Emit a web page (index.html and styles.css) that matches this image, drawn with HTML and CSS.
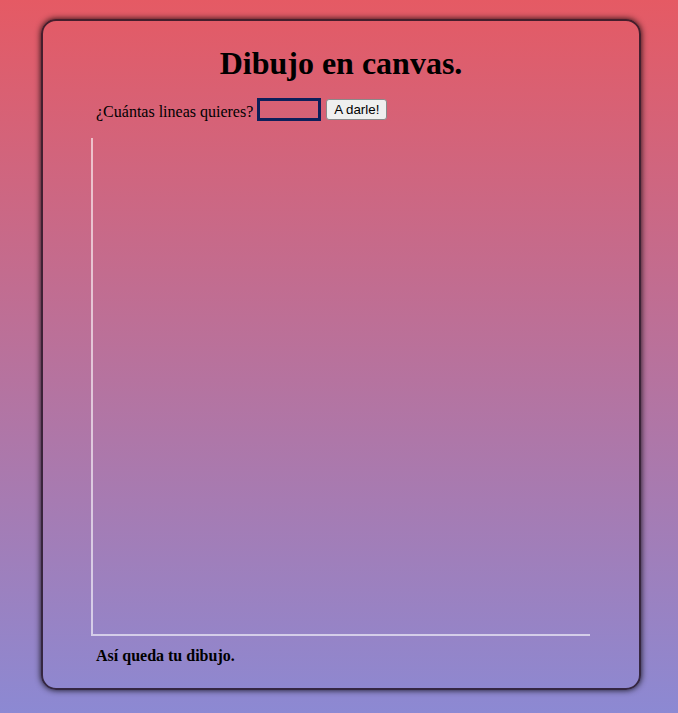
FILE: index.html
```html
<!DOCTYPE html>
<html lang="es">
<head>
<meta charset="utf-8">
<title>Dibujo en canvas</title>
<link rel="stylesheet" href="styles.css">
</head>
<body>
<main class="card">
  <h1 class="title">Dibujo en canvas.</h1>
  <div class="controls">
    <span class="prompt">¿Cuántas lineas quieres?</span>
    <input class="lines-input" type="text">
    <button class="go-btn" type="button">A darle!</button>
  </div>
  <div class="canvas"></div>
  <p class="caption">Así queda tu dibujo.</p>
</main>
</body>
</html>
```
FILE: styles.css
```css
html, body {
  margin: 0;
  padding: 0;
  height: 713px;
}
body {
  background: linear-gradient(to bottom, #e55a64 0%, #8c89d3 100%);
  font-family: "Liberation Serif", "Times New Roman", serif;
  color: #000;
  padding-top: 19px;
  box-sizing: border-box;
  overflow: hidden;
}
.card {
  box-sizing: border-box;
  width: 600px;
  height: 671px;
  margin: 0 0 0 41px;
  border: 2px solid rgba(30, 15, 30, 0.8);
  border-radius: 15px;
  box-shadow: 0 0 6px rgba(0, 0, 0, 0.9);
  display: flow-root;
}
.title {
  font-size: 32px;
  font-weight: bold;
  text-align: center;
  margin: 24px 0 0;
  line-height: 37px;
}
.controls {
  margin: 16px 0 0 53px;
  display: flex;
  align-items: center;
  font-size: 16px;
  line-height: 18px;
}
.prompt {
  margin-top: 5px;
}
.lines-input {
  box-sizing: border-box;
  width: 64px;
  height: 23px;
  border: 3px solid #0d1f5a;
  background: transparent;
  padding: 0;
  margin: 0 0 0 4px;
}
.go-btn {
  box-sizing: border-box;
  font-family: "Liberation Sans", Arial, sans-serif;
  font-size: 13.33px;
  width: 61px;
  height: 21px;
  padding: 0;
  margin: 0 0 0 5px;
  background: #efefef;
  border: 1px solid #8a8a8a;
  border-radius: 3px;
  color: #000;
}
.canvas {
  box-sizing: border-box;
  width: 499px;
  height: 498px;
  margin: 17px 0 0 48px;
  border-left: 2px solid rgba(255, 255, 255, 0.6);
  border-bottom: 2px solid rgba(255, 255, 255, 0.6);
}
.caption {
  margin: 11px 0 0 53px;
  font-size: 16px;
  font-weight: bold;
}
```
